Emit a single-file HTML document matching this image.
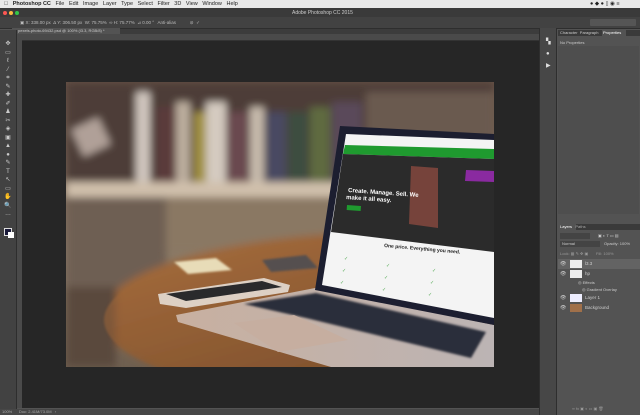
<!DOCTYPE html>
<html><head><style>
body{margin:0;width:640px;height:415px;overflow:hidden;background:#535353;font-family:"Liberation Sans",sans-serif;position:relative}
.a{position:absolute}
.t{font-size:5px;color:#ccc;white-space:nowrap}
</style></head><body>
<div class="a" style="left:0;top:0;width:640px;height:8px;background:#e8e8e8"></div>
<div class="a" style="left:4px;top:1px;font-size:5.5px;color:#222;white-space:nowrap">&#63743;&nbsp;&nbsp; <b>Photoshop CC</b>&nbsp;&nbsp; File&nbsp;&nbsp; Edit&nbsp;&nbsp; Image&nbsp;&nbsp; Layer&nbsp;&nbsp; Type&nbsp;&nbsp; Select&nbsp;&nbsp; Filter&nbsp;&nbsp; 3D&nbsp;&nbsp; View&nbsp;&nbsp; Window&nbsp;&nbsp; Help</div>
<div class="a" style="left:590px;top:1px;font-size:5.5px;color:#222">● ◆ ● ▯ ◉ ≡</div>
<div class="a" style="left:0;top:8px;width:640px;height:9px;background:#3a3a3a"></div>
<div class="a" style="left:3px;top:11px;width:4px;height:4px;border-radius:50%;background:#fc5753"></div>
<div class="a" style="left:9px;top:11px;width:4px;height:4px;border-radius:50%;background:#fdbc40"></div>
<div class="a" style="left:15px;top:11px;width:4px;height:4px;border-radius:50%;background:#33c748"></div>
<div class="a t" style="left:292px;top:10px">Adobe Photoshop CC 2015</div>
<div class="a" style="left:0;top:17px;width:640px;height:11px;background:#424242;border-bottom:1px solid #2e2e2e"></div>
<div class="a t" style="left:20px;top:20px;color:#bbb;font-size:4.5px">▣ X: 338.00 px &nbsp;Δ Y: 306.50 px &nbsp;W: 75.75% &nbsp;∞ H: 75.77% &nbsp;⊿ 0.00 ° &nbsp; Anti-alias &nbsp;&nbsp;&nbsp;&nbsp;&nbsp;&nbsp;&nbsp;&nbsp;&nbsp; ⊘ &nbsp;✓</div>
<div class="a" style="left:590px;top:19px;width:46px;height:7px;background:#555;border-radius:1px"></div>
<div class="a" style="left:16px;top:29px;width:523px;height:5px;background:#3c3c3c"></div>
<div class="a" style="left:12px;top:28px;width:108px;height:6px;background:#535353"></div>
<div class="a t" style="left:18px;top:28px;font-size:4px">pexels-photo-69432.psd @ 100% (l3.3, RGB/8) *</div>
<div class="a" style="left:16px;top:34px;width:523px;height:6px;background:#4a4a4a;border-bottom:1px solid #333"></div>
<div class="a" style="left:16px;top:40px;width:6px;height:368px;background:#4a4a4a"></div>
<div class="a" style="left:0;top:30px;width:16px;height:380px;background:#424242;border-right:1px solid #2e2e2e"></div>
<div class="a" style="left:4px;top:40px;font-size:6px;line-height:8.5px;color:#ccc;width:8px;text-align:center">✥<br>▭<br>ℓ<br>⁄<br>⌗<br>✎<br>✚<br>✐<br>♟<br>✂<br>◈<br>▣<br>▲<br>●<br>✎<br>T<br>↖<br>▭<br>✋<br>🔍<br>…</div>
<div class="a" style="left:4px;top:228px;width:6px;height:6px;background:#1a1a3a;border:1px solid #ddd"></div>
<div class="a" style="left:8px;top:232px;width:6px;height:6px;background:#fff;"></div>
<div class="a" style="left:22px;top:41px;width:517px;height:367px;background:#262626"></div>
<svg class="a" style="left:66px;top:82px" width="428" height="285" viewBox="0 0 428 285">
<defs>
<filter id="b" x="-10%" y="-10%" width="120%" height="120%"><feGaussianBlur stdDeviation="4"/></filter>
<filter id="b2"><feGaussianBlur stdDeviation="1"/></filter>
<linearGradient id="bg" x1="0" y1="0" x2="0" y2="1"><stop offset="0" stop-color="#6a5548"/><stop offset="0.6" stop-color="#8a7a66"/><stop offset="1" stop-color="#6e5f50"/></linearGradient>
<linearGradient id="tbl" x1="0" y1="0" x2="1" y2="1"><stop offset="0" stop-color="#a86e3e"/><stop offset="1" stop-color="#6a4224"/></linearGradient>
<linearGradient id="base" x1="0" y1="0" x2="1" y2="0"><stop offset="0" stop-color="#c8b0a0"/><stop offset="1" stop-color="#bcb4b4"/></linearGradient>
</defs>
<rect width="428" height="285" fill="url(#bg)"/>
<g filter="url(#b)">
<rect x="0" y="0" width="428" height="110" fill="#4e3c38"/>
<rect x="70" y="10" width="14" height="95" fill="#d0c6be"/>
<rect x="90" y="25" width="20" height="80" fill="#5a3a3a"/>
<rect x="110" y="20" width="14" height="85" fill="#bcae9e"/>
<rect x="128" y="30" width="14" height="75" fill="#a09040"/>
<rect x="140" y="20" width="20" height="85" fill="#d4cac0"/>
<rect x="162" y="30" width="20" height="75" fill="#6a4a50"/>
<rect x="184" y="25" width="14" height="80" fill="#c6baac"/>
<rect x="200" y="30" width="20" height="75" fill="#4a4a62"/>
<rect x="222" y="30" width="20" height="70" fill="#3e4e40"/>
<rect x="244" y="25" width="20" height="75" fill="#5e6a40"/>
<rect x="266" y="20" width="30" height="80" fill="#5a4a5a"/>
<rect x="300" y="10" width="128" height="95" fill="#6a5a50"/>
<rect x="10" y="40" width="30" height="30" fill="#b0a098" transform="rotate(-25 25 55)"/>
<rect x="0" y="100" width="290" height="15" fill="#d0c0ac"/>
<rect x="0" y="115" width="300" height="55" fill="#8a7864"/>
<rect x="0" y="115" width="100" height="100" fill="#6e5e52"/>
<ellipse cx="330" cy="235" rx="295" ry="85" fill="url(#tbl)"/>
<rect x="0" y="205" width="50" height="80" fill="#5a4a3e"/>
</g>
<ellipse cx="330" cy="238" rx="292" ry="82" fill="url(#tbl)" opacity="0.6" filter="url(#b2)"/>
<polygon points="108,180 150,176 166,188 122,192" fill="#e8dcb8" filter="url(#b2)"/>
<polygon points="196,178 240,173 252,186 205,190" fill="#555050" filter="url(#b2)"/>
<polygon points="92,212 198,196 224,203 222,210 120,226 94,222" fill="#ddd0c4"/>
<polygon points="100,212 196,199 216,205 120,219" fill="#2a2a2c"/>
<!-- laptop base -->
<polygon points="110,233 249,206 428,243 428,285 265,285 112,240" fill="url(#base)"/>
<polygon points="178,222 250,211 420,250 405,276 240,236" fill="#2c2e3a" filter="url(#b2)"/>
<polygon points="168,241 228,233 282,258 212,270" fill="#c6aea0"/>
<!-- screen -->
<polygon points="274,44 428,52 428,243 249,208" fill="#1c1e30"/>
<polygon points="280,52 428,58 428,236 256,203" fill="#f4f4f4"/>
<polygon points="279,63 428,67 428,77 277,72" fill="#1f9a2f"/>
<polygon points="277,72 428,77 428,170 265,150" fill="#2b2b2b"/>
<polygon points="345,84 372,86 372,146 343,142" fill="#8a4a40" opacity="0.8"/>
<polygon points="400,88 428,89 428,100 399,99" fill="#8a2aa0"/>
<text x="282" y="110" font-size="6" fill="#fff" font-weight="bold" font-family="Liberation Sans" transform="rotate(4 282 110)">Create. Manage. Sell. We</text>
<text x="280" y="117" font-size="6" fill="#fff" font-weight="bold" font-family="Liberation Sans" transform="rotate(4 280 117)">make it all easy.</text>
<rect x="281" y="123" width="14" height="5" fill="#1f9a2f" transform="rotate(4 281 123)"/>
<text x="318" y="165" font-size="5" fill="#222" font-weight="bold" font-family="Liberation Sans" transform="rotate(5 318 165)">One price. Everything you need.</text>
<g fill="#5a5" font-size="5">
<text x="278" y="178">✓</text><text x="276" y="190">✓</text><text x="274" y="202">✓</text>
<text x="320" y="185">✓</text><text x="318" y="197">✓</text><text x="316" y="209">✓</text>
<text x="366" y="190">✓</text><text x="364" y="202">✓</text><text x="362" y="214">✓</text>
</g>
</svg>
<div class="a" style="left:539px;top:28px;width:1px;height:387px;background:#2e2e2e"></div>
<div class="a" style="left:540px;top:28px;width:16px;height:387px;background:#474747"></div>
<div class="a" style="left:546px;top:36px;font-size:6px;color:#ddd;line-height:12px">▚<br>●<br>▶</div>
<div class="a" style="left:556px;top:28px;width:1px;height:387px;background:#2e2e2e"></div>
<div class="a" style="left:558px;top:30px;width:82px;height:6px;background:#3a3a3a"></div>
<div class="a t" style="left:560px;top:30px;font-size:4px">Character &nbsp;Paragraph</div>
<div class="a" style="left:602px;top:30px;width:24px;height:6px;background:#535353"></div>
<div class="a t" style="left:603px;top:30px;font-size:4px;color:#fff">Properties</div>
<div class="a t" style="left:560px;top:40px;font-size:4px">No Properties</div>
<div class="a" style="left:558px;top:46px;width:81px;height:168px;background:#4e4e4e"></div>
<div class="a" style="left:558px;top:224px;width:82px;height:6px;background:#3a3a3a"></div>
<div class="a" style="left:558px;top:224px;width:18px;height:6px;background:#535353"></div>
<div class="a t" style="left:560px;top:224px;font-size:4px;color:#fff">Layers &nbsp;&nbsp;<span style="color:#aaa">Paths</span></div>
<div class="a" style="left:560px;top:233px;width:30px;height:6px;background:#444"></div>
<div class="a t" style="left:598px;top:233px;font-size:4px">▣ ◐ T ▭ ▤</div>
<div class="a" style="left:560px;top:241px;width:40px;height:6px;background:#444"></div>
<div class="a t" style="left:562px;top:241px;font-size:4px">Normal</div>
<div class="a t" style="left:604px;top:241px;font-size:4px">Opacity: 100%</div>
<div class="a t" style="left:560px;top:251px;font-size:4px;color:#999">Lock: ▦ ✎ ✥ ▣ &nbsp;&nbsp;&nbsp;&nbsp;&nbsp;&nbsp;Fill: 100%</div>
<div class="a" style="left:558px;top:259px;width:82px;height:10px;background:#636363"></div>
<div class="a t" style="left:560px;top:261px;font-size:5px">👁</div><div class="a" style="left:570px;top:260px;width:12px;height:8px;background:#eee"></div><div class="a t" style="left:585px;top:261px;font-size:4.5px">l3.3</div>
<div class="a t" style="left:560px;top:271px;font-size:5px">👁</div><div class="a" style="left:570px;top:270px;width:12px;height:8px;background:#eee"></div><div class="a t" style="left:585px;top:271px;font-size:4.5px">hp</div>
<div class="a t" style="left:578px;top:280px;font-size:4px">◎ Effects</div>
<div class="a t" style="left:582px;top:287px;font-size:4px">◎ Gradient Overlay</div>
<div class="a t" style="left:560px;top:295px;font-size:5px">👁</div><div class="a" style="left:570px;top:294px;width:12px;height:8px;background:#eef"></div><div class="a t" style="left:585px;top:295px;font-size:4.5px">Layer 1</div>
<div class="a t" style="left:560px;top:305px;font-size:5px">👁</div><div class="a" style="left:570px;top:304px;width:12px;height:8px;background:#a0704a"></div><div class="a t" style="left:585px;top:305px;font-size:4.5px">Background</div>
<div class="a t" style="left:572px;top:406px;font-size:4px;color:#999">∞ fx ▣ ◐ ▭ ▣ 🗑</div>
<div class="a" style="left:0;top:409px;width:539px;height:6px;background:#474747"></div>
<div class="a t" style="left:2px;top:409px;font-size:4px;color:#aaa">100% &nbsp;&nbsp;&nbsp;&nbsp; Doc: 2.41M/73.0M &nbsp; ›</div>
</body></html>
